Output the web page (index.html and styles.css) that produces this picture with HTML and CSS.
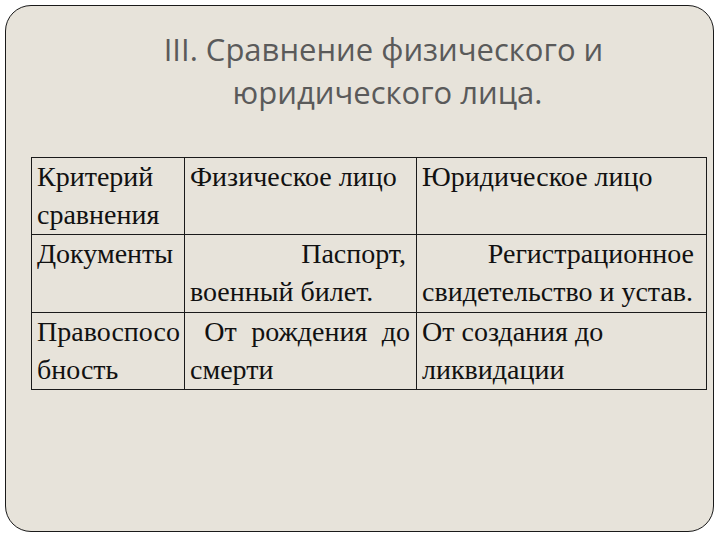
FILE: index.html
```html
<!DOCTYPE html>
<html lang="ru">
<head>
<meta charset="utf-8">
<link rel="stylesheet" href="styles.css">
</head>
<body>
<div class="slide">
  <h1 class="title"><span class="t1">III. Сравнение физического и</span><span class="t2">юридического лица.</span></h1>
  <table class="grid">
    <colgroup>
      <col class="c1"><col class="c2"><col class="c3">
    </colgroup>
    <tr class="r1">
      <td>Критерий<br>сравнения</td>
      <td>Физическое лицо</td>
      <td>Юридическое лицо</td>
    </tr>
    <tr class="r2">
      <td>Документы</td>
      <td><div class="right">Паспорт,</div><div>военный билет.</div></td>
      <td><div class="right r-wide">Регистрационное</div><div>свидетельство и устав.</div></td>
    </tr>
    <tr class="r3">
      <td>Правоспосо<br>бность</td>
      <td><div class="just"><span></span><span>От</span><span>рождения</span><span>до</span></div><div>смерти</div></td>
      <td>От создания до<br>ликвидации</td>
    </tr>
  </table>
</div>
</body>
</html>
```
FILE: styles.css
```css
html, body {
  margin: 0;
  padding: 0;
  background: #ffffff;
}
body {
  padding: 5px;
}
.slide {
  box-sizing: border-box;
  width: 709px;
  height: 527px;
  border: 1px solid #1a1a1a;
  border-radius: 26px;
  background: #e7e3da;
  padding-top: 22px;
}
.title {
  margin: 0;
  font-family: "Open Sans", "Liberation Sans", sans-serif;
  font-weight: normal;
  font-size: 31px;
  line-height: 43px;
  color: #5a5a5a;
  text-align: center;
  padding-left: 56px;
}
.t1, .t2 { display: block; }
.t1 { padding-right: 8px; }
.grid {
  margin: 43px 0 0 25px;
  border-collapse: collapse;
  width: 675px;
  table-layout: fixed;
  font-family: "Liberation Serif", "Times New Roman", serif;
  font-size: 28px;
  line-height: 38px;
  color: #111;
}
.c1 { width: 153px; }
.c2 { width: 232px; }
.c3 { width: 290px; }
.grid td {
  border: 1px solid #1a1a1a;
  padding: 0 6px 0 5px;
  vertical-align: top;
  white-space: nowrap;
}
.r1 td { height: 75px; }
.r2 td { height: 77px; }
.r3 td { height: 76px; }
.right { text-align: right; padding-right: 4px; }
.r-wide { padding-right: 6px; }
.just {
  display: flex;
  justify-content: space-between;
}
```
